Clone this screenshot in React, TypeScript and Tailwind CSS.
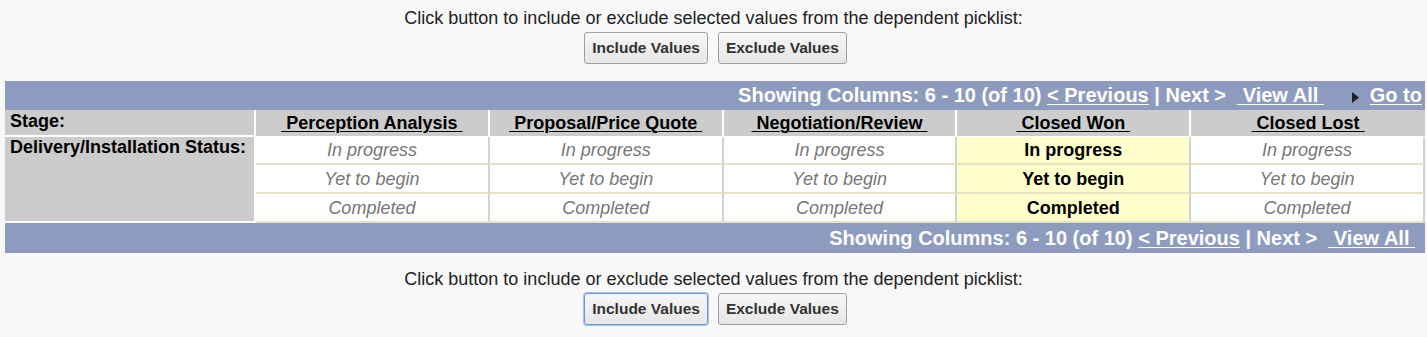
import React from 'react';

const columns = ['Perception Analysis', 'Proposal/Price Quote', 'Negotiation/Review', 'Closed Won', 'Closed Lost'];
const values = ['In progress', 'Yet to begin', 'Completed'];
const rowHeights = ['h-[28px]', 'h-[29px]', 'h-[29px]'];
const selectedCol = 3;

const ButtonRow: React.FC<{ focused?: boolean }> = ({ focused }) => (
  <div className="flex flex-col items-center">
    <p className="text-[18px] leading-[20px] text-[#222]">
      Click button to include or exclude selected values from the dependent picklist:
    </p>
    <div className="flex gap-[10px] mt-[4px] ml-[4px]">
      <button
        className={
          'h-[32px] px-[7px] rounded-[3px] border bg-gradient-to-b from-[#f7f7f7] to-[#e6e6e6] text-[15.5px] font-bold text-[#333] ' +
          (focused ? 'border-[#6f93d6] shadow-[0_0_0_1px_#a8c0ec]' : 'border-[#a0a0a0]')
        }
      >
        Include Values
      </button>
      <button className="h-[32px] px-[7px] rounded-[3px] border border-[#a0a0a0] bg-gradient-to-b from-[#f7f7f7] to-[#e6e6e6] text-[15.5px] font-bold text-[#333]">
        Exclude Values
      </button>
    </div>
  </div>
);

const Link: React.FC<{ children: React.ReactNode }> = ({ children }) => (
  <span className="underline underline-offset-2 decoration-1">{children}</span>
);

const PagerBar: React.FC<{ goTo?: boolean }> = ({ goTo }) => (
  <div
    className={
      'bg-[#8d9cbe] text-white font-bold text-[20px] text-right whitespace-pre overflow-hidden ' +
      (goTo ? 'h-[29px] leading-[29px] pr-[3px]' : 'h-[30px] leading-[30px] pr-[10px]')
    }
  >
    Showing Columns: 6 - 10 (of 10) <Link>&lt; Previous</Link> | Next &gt;  <Link> View All </Link>
    {goTo && (
      <>
        {'     '}
        <svg width="7" height="11" viewBox="0 0 7 11" className="inline-block align-[-1px]">
          <path d="M0 0 L7 5.5 L0 11 Z" fill="#222" />
        </svg>
        {'  '}
        <Link>Go to</Link>
      </>
    )}
  </div>
);

export default function App() {
  return (
    <div className="w-[1427px] h-[337px] bg-[#f8f8f8] font-['Liberation_Sans',Arial,sans-serif] pt-[8px]">
      <ButtonRow />
      <div className="mx-[5px] mt-[17px] w-[1420px]">
        <PagerBar goTo />
        <table className="w-full border-separate border-spacing-0 table-fixed">
          <colgroup>
            <col className="w-[251px]" />
            {columns.map((c) => (
              <col key={c} />
            ))}
          </colgroup>
          <tbody>
            <tr className="h-[27px]">
              <td className="bg-[#cccccc] border-r-[2px] border-b-[2px] border-white pl-[5px] text-[18px] font-bold text-black align-top leading-[22px]">
                Stage:
              </td>
              {columns.map((c, i) => (
                <td
                  key={c}
                  className={
                    'bg-[#cccccc] border-b-[1px] border-white text-center text-[18px] font-bold text-black leading-[26px] ' +
                    (i < columns.length - 1 ? 'border-r-[2px]' : '')
                  }
                >
                  <Link>{'\u00a0' + c + '\u00a0'}</Link>
                </td>
              ))}
            </tr>
            {values.map((v, r) => (
              <tr key={v} className={rowHeights[r]}>
                {r === 0 && (
                  <td
                    rowSpan={3}
                    className="bg-[#cccccc] border-r-[2px] border-b-[2px] border-white pl-[5px] text-[18px] font-bold text-black align-top leading-[20px]"
                  >
                    Delivery/Installation Status:
                  </td>
                )}
                {columns.map((c, i) => (
                  <td
                    key={c}
                    className={
                      'border-b-[2px] border-b-[#e6e1c4] border-r-[2px] border-r-[#d2d2d2] text-center text-[18px] leading-[24px] ' +
                      (i === selectedCol ? 'bg-[#ffffcc] font-bold text-black' : 'bg-white italic text-[#777777]')
                    }
                  >
                    {v}
                  </td>
                ))}
              </tr>
            ))}
          </tbody>
        </table>
        <PagerBar />
      </div>
      <div className="mt-[16px]">
        <ButtonRow focused />
      </div>
    </div>
  );
}
